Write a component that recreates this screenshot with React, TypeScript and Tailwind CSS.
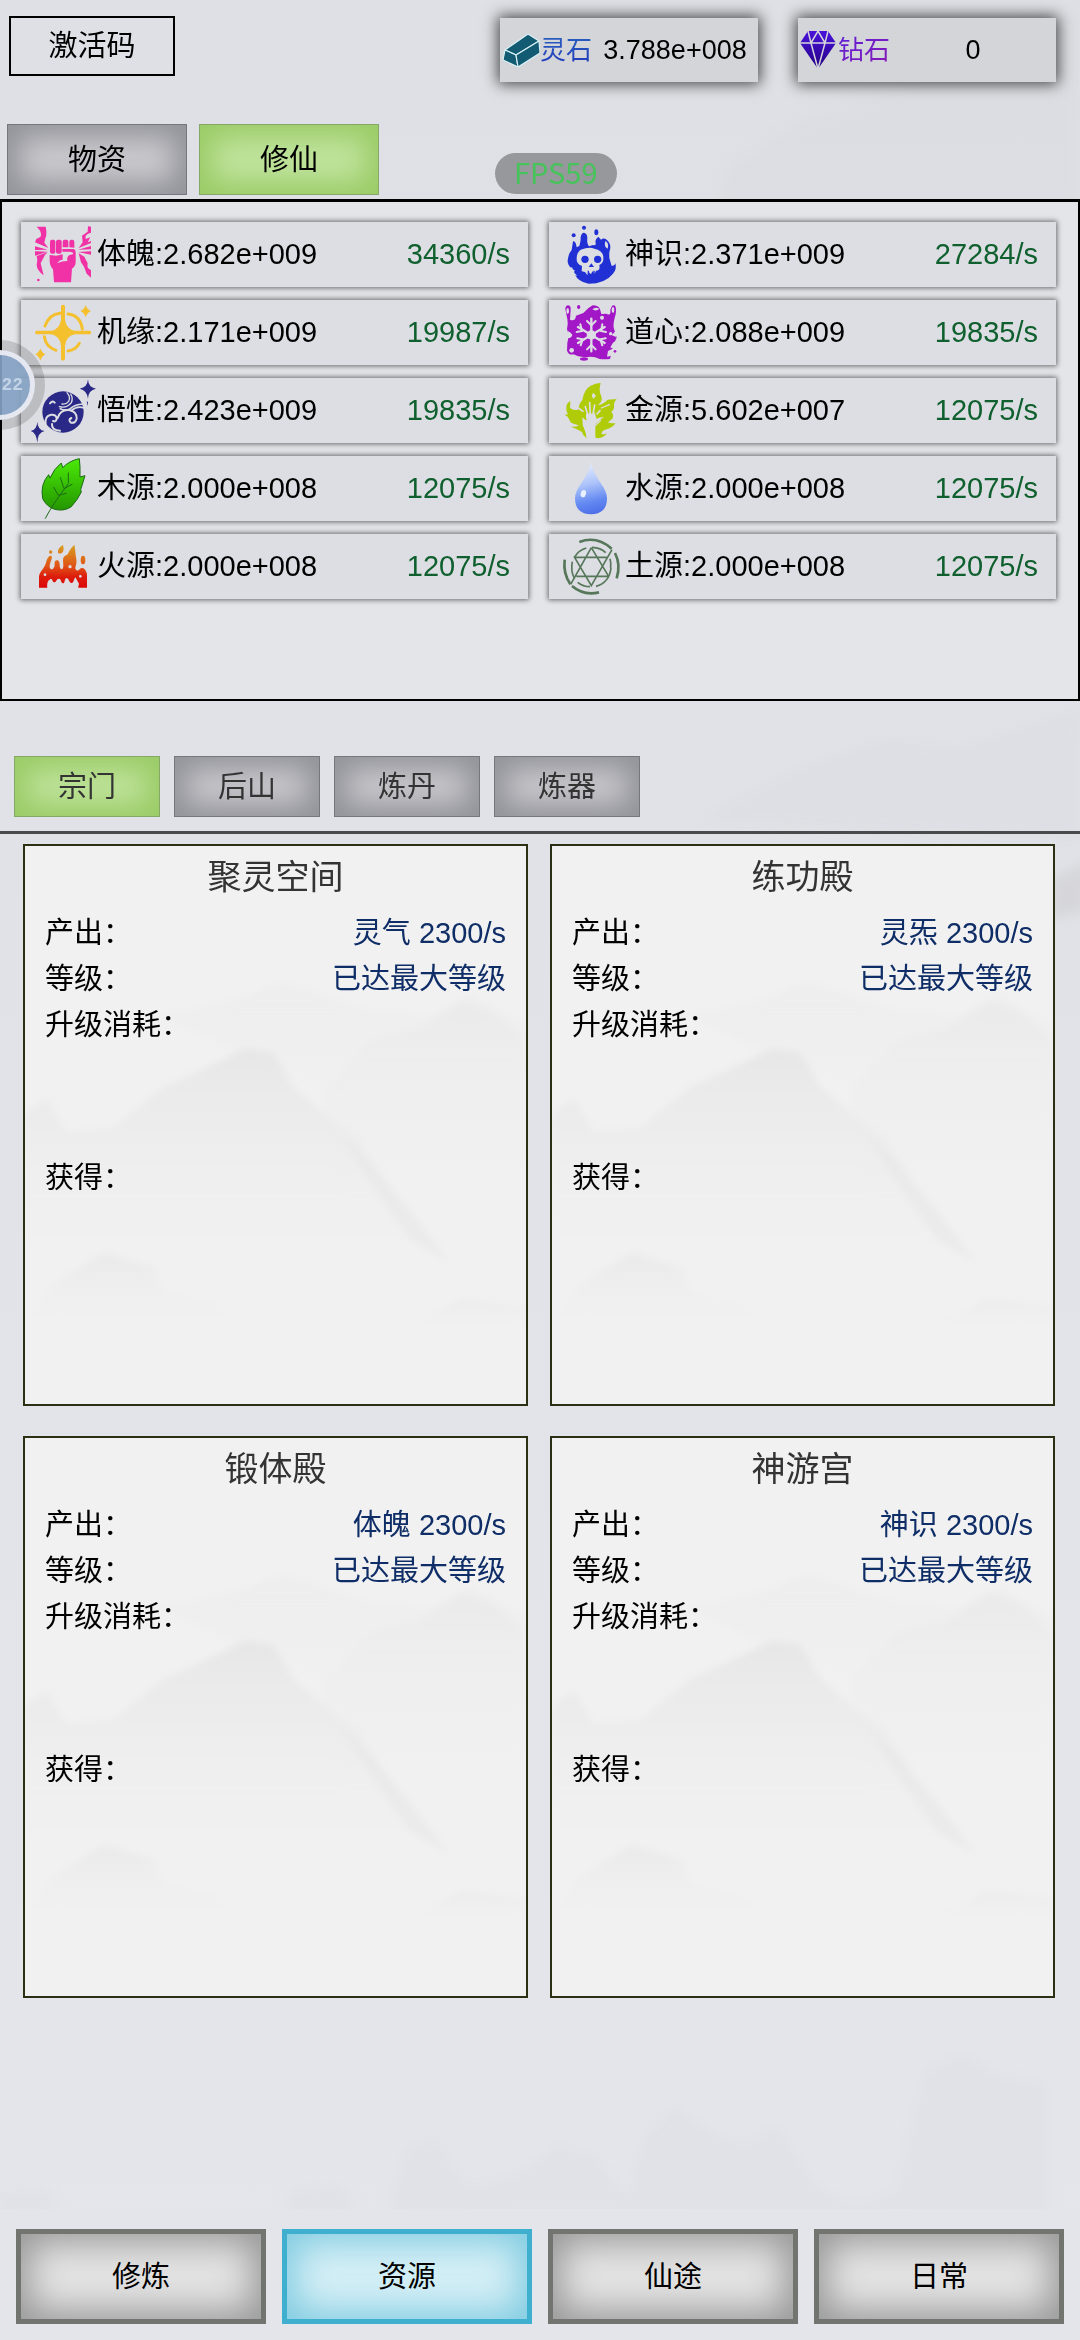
import { useState, type ReactNode } from "react";
import clsx from "clsx";

type IconProps = { box: string; children: ReactNode };

const Icon = ({ box, children }: IconProps) => (
  <svg viewBox={box} className="h-[58px] w-[58px] shrink-0 overflow-visible" aria-hidden="true">
    {children}
  </svg>
);

const FistIcon = () => (
  <Icon box="102 76 174 174">
    <g fill="#f032a6">
      <path d="M110 78h27q5 22-1 35l-3 13 12 16-40-17 4-10 12-6q8-13-11-31z" />
      <path d="M105 137l38 10-38 1zM105 152l38 1-38 12zM110 166l33-11q-10 8-14 19l-7 14 9 36q-20-14-21-31l2-15z" />
      <path d="M273 78v18q-20 4-16 19l14-5-8 15 10-4v6l-37 15 12-17-2-20 17-12 1-16zM273 136v10l-39 1zM273 152v10l-39-8zM236 158l17 10 10 20q-2 8 1 14l9 7v22l-13-12-8-21-9-13z" />
      <circle cx="115" cy="238" r="4" />
      <rect x="150" y="117" width="16" height="42" rx="6" />
      <rect x="168" y="117" width="17" height="42" rx="6" />
      <path d="M188 123q0-6 6-6h5q6 0 6 6v17h-17zM208 123q0-6 6-6h3q6 0 6 6v18l-15-1z" />
      <path d="M187 145h32q8 1 8 10v30q0 11-11 19l-3 41h-51l-3-39q-9-9-10-25v-18l20 2 19-4v16q-11 1-16 11 13-7 30-7-2-12 5-17l13-4q-1-7-13-7h-20z" />
    </g>
  </Icon>
);

const CompassIcon = () => (
  <Icon box="102 310 174 174">
    <g fill="none" stroke="#f4c02e" strokeWidth="9" strokeLinecap="round">
      <path d="M180 338q-32 3-45 38M204 340q37 4 43 45M133 408q4 31 35 41M238 428q-10 19-34 23" />
    </g>
    <path
      d="M183 316q6-8 12 0v41q4 29 30 33h45q8 6 0 11h-45q-27 5-30 35v40q-6 8-12 0v-40q-2-29-29-35h-45q-8-5 0-11h45q25-4 29-33zM257 313q4 14 16 18-12 5-16 19-4-14-16-19 12-4 16-18zM121 443q4 14 16 18-12 5-16 19-4-14-16-19 12-4 16-18z"
      fill="#f4c02e"
    />
  </Icon>
);

const OrbIcon = () => (
  <Icon box="102 544 174 174">
    <circle cx="189" cy="634" r="62" fill="#2b2987" />
    <g fill="none" stroke="#dddee3" strokeLinecap="round">
      <path d="M201 576q12 14 5 26-8 10-20 8M212 580q8 12 2 26-14 18-36 12" strokeWidth="4" />
      <path d="M249 610q-26 2-38 14-16 8-30 0M252 622q-20-8-38 8" strokeWidth="5" />
      <path d="M137 672q-4-26 16-30 17-1 17 13-3 10-11 6M180 690q-26-2-24-20M173 652q8-26 34-24 24 4 23 26-3 15-17 12-10-8 1-14" strokeWidth="6" />
      <path d="M150 608q8-10 14-2" strokeWidth="6" />
    </g>
    <path d="M264 536q1 25 24 28-23 4-24 30-3-25-25-30 23-3 25-28zM112 663q1 25 22 28-21 4-22 35-3-30-20-35 19-4 20-28zM260 602l4 2-1 13z" fill="#2b2987" />
  </Icon>
);

const LeafIcon = () => (
  <Icon box="102 58 174 174">
    <defs>
      <linearGradient id="leaf" x1="0" y1="0" x2="0" y2="1">
        <stop stopColor="#4bea08" />
        <stop offset="1" stopColor="#249600" />
      </linearGradient>
    </defs>
    <path
      d="M238 54q3 22 2 55l15-4-13 42 2 7q-10 22-30 44-22 15-50 8-24-8-36-32-8-43 18-72l4 10q12-28 34-45l4 14q20-21 50-27z"
      fill="url(#leaf)"
      stroke="#1c6b16"
      strokeWidth="3"
    />
    <path d="M136 233q23-44 69-104M205 97v28M181 111l11 33 24-13M161 140l14 24 24-6" fill="none" stroke="#1c6b16" strokeWidth="3" strokeLinecap="round" />
  </Icon>
);

const FireIcon = () => (
  <Icon box="102 292 174 174">
    <defs>
      <linearGradient id="fire" gradientUnits="userSpaceOnUse" x1="0" y1="312" x2="0" y2="440">
        <stop stopColor="#d7a120" />
        <stop offset=".5" stopColor="#e05317" />
        <stop offset=".75" stopColor="#dc1d0c" />
        <stop offset="1" stopColor="#dd0707" />
      </linearGradient>
    </defs>
    <g fill="url(#fire)">
      <path d="M117 441V408C118 392 132 386 138 366C142 350 150 342 155 347C158 356 148 366 149 380C152 390 162 388 164 374C162 362 168 356 175 360C182 366 176 380 184 386C192 384 190 374 189 360C188 350 194 344 202 342C208 330 214 320 223 312C227 330 226 342 229 356C231 370 226 376 226 384C230 392 236 390 240 384C250 378 258 388 261 400V441H235C234 436 240 430 234 424L226 410C220 418 222 426 215 427C207 428 208 414 200 412C192 414 196 428 189 428C182 426 184 414 177 414C168 414 170 426 162 425C156 422 158 414 152 415C144 418 140 428 142 441Z" />
      <path d="M189 313Q193 327 188 335Q180 342 174 336Q171 324 189 313z" />
      <circle cx="152" cy="334" r="5" />
      <ellipse cx="249" cy="358" rx="7" ry="13" />
    </g>
    <g fill="#dddee3">
      <circle cx="210" cy="378" r="5" />
      <circle cx="135" cy="402" r="4" />
      <circle cx="241" cy="407" r="4" />
    </g>
  </Icon>
);

const SkullIcon = () => (
  <Icon box="96 76 174 174">
    <path
      d="M129 122q8-3 11 18l8-4q5-15 4-27 4-15 12-12 8 3 8 16-2 15 5 24l12-4q10 3 8-6-3-11 8-19l8 9q8-7 17 0 12 10 11 25-5 15-3 30l7 24q12-3 11-10 5 20-7 33-24 30-73 30-32-5-42-29l-5-4 6-6q-18-8-22-25 0-23 12-37z"
      fill="#2030d4"
    />
    <path d="M226 121q12 7 7 23-12-5-7-23z" fill="#dddee3" />
    <path
      d="M152 147q26-9 41-3 24 4 27 24 2 19-12 25 4 18-10 17l-4 9-7-7-4 9-7-7-4 9-7-9-10-2 1-16q-18-7-16-25 1-17 12-24zM113 204l13-4 8 18 8 7q-20-3-29-21z"
      fill="#dddee3"
    />
    <g fill="#2030d4">
      <circle cx="165" cy="176" r="11" />
      <circle cx="203" cy="176" r="11" />
      <path d="M184 188l8 11h-16zM173 210h4v10h-4zM190 210h4v10h-4z" />
      <circle cx="162" cy="81" r="6" />
      <circle cx="131" cy="104" r="6" />
      <ellipse cx="199" cy="95" rx="6" ry="9" />
    </g>
  </Icon>
);

const FrostIcon = () => (
  <Icon box="96 310 174 174">
    <path
      d="M106 326q0-12 9-12 8 1 7 13l-2 30q16 6 18-12l22-8q14-16 28-23 18 0 22 12l4 14 16-1q13 9 11-11 4-16 12-14 8 6 4 27-8 26-6 40l9 28q-3 14-11 17l-8 14 11 6-8 14-4 15q-18 2-31 0-21-11-42-5-26-2-36-9-14 4-20-11l1-23 4-20-5-22q4-14 1-30z"
      fill="#a318c6"
    />
    <g fill="#dddee3">
      <ellipse cx="113" cy="331" rx="4" ry="9" />
      <ellipse cx="249" cy="328" rx="4" ry="9" />
      <path d="M187 326q10-9 21-1-10 8-21 1zM112 390q10 4 15 12-2 10-13 10zM256 392l6 4-3 13-14-5z" />
      <circle cx="216" cy="351" r="6" />
      <circle cx="125" cy="449" r="7" />
      <circle cx="242" cy="399" r="5" />
      <path d="M257 426l-9 18-14 7-3 17 13-3 8 5 10-23z" />
    </g>
    <g stroke="#dddee3" strokeWidth="7" strokeLinecap="round" fill="none">
      <path d="M184 354v98M144 379l80 48M144 427l80-48" />
      <path d="M171 361l13 13 13-13M171 446l13-13 13 13M151 371l5 20-16 3M217 371l-4 20 15 3M142 413l16 3-6 18M227 413l-16 3 6 18" strokeWidth="6" />
    </g>
    <circle cx="184" cy="403" r="14" fill="#dddee3" />
    <g fill="#a318c6">
      <ellipse cx="146" cy="319" rx="5" ry="6" />
      <ellipse cx="162" cy="475" rx="12" ry="5" />
      <circle cx="255" cy="452" r="4" />
    </g>
  </Icon>
);

const GoldIcon = () => (
  <Icon box="96 544 174 174">
    <path
      d="M212 548q-7 22 2 39 5 15-10 26 15-1 29-16 14-2 27-1-9 8-8 19 2 10-8 18 9 10 3 21l-13 11q4 3 23 3-15 18-33 19-8 3-10 13 10 2 17-2-14 19-35 13l-2-16 2-25 26-22-14 3-11 5-2-24-7 22-22 4-9-8 1 22 10 27q-2 9 3 14-12-7-15-19-15-10-34-16 17 2 24-4-14-5-23-8l-10-18-9-6 10-1q-7-11-5-23 1-10 12-17l-1 20q9 10 24 6l3-11q2-9 10-18 5-32 25-43 14-7 29-8z"
      fill="#b0cb08"
    />
    <g stroke="#dddee3" strokeWidth="5" strokeLinecap="round" fill="none">
      <path d="M166 618l8 27M179 606l2 38M194 613l-6 32M201 640l9-10M145 622l14 10" />
      <path d="M160 656l14 14v42M194 712v-36l17-16M214 622l24-10" strokeWidth="4" />
    </g>
    <path d="M168 640q13-6 26 3l6 10-13 10q-14 1-19-10zM173 660h19l2 54h-18zM190 576l8 10-8 8q-8-10 0-18z" fill="#dddee3" />
  </Icon>
);

const DropIcon = () => (
  <Icon box="96 58 174 174">
    <defs>
      <linearGradient id="drop" x1=".45" y1="0" x2=".6" y2="1">
        <stop stopColor="#e6edff" />
        <stop offset=".4" stopColor="#aec4fa" />
        <stop offset=".75" stopColor="#6389f1" />
        <stop offset="1" stopColor="#4d6ee9" />
      </linearGradient>
    </defs>
    <path d="M183 64q4 28 29 63 19 26 19 46 0 47-48 48-48-1-48-48 0-20 19-46 25-35 29-63z" fill="url(#drop)" />
    <ellipse cx="160" cy="159" rx="8" ry="11" fill="#e9f0ff" transform="rotate(14 160 159)" />
  </Icon>
);

const EarthIcon = () => (
  <Icon box="96 292 174 174">
    <g fill="none" stroke="#57775a" strokeWidth="5">
      <path d="M148 304q52-20 97 20M104 357q-5 42 17 74M126 436q35 30 81 19M255 337q18 35 5 76" strokeWidth="8" />
      <path d="M169 322q-24 7-35 27M127 363q-6 30 7 51M143 425q16 13 37 13M198 437q40-11 45-55M186 320q27 1 41 16M240 354q4 14 2 28" />
      <path d="M184 321l-62 110M184 321l52 86M132 347l52 88 62-108M132 350h102M139 407h98" strokeWidth="5" />
    </g>
  </Icon>
);

const IngotIcon = () => (
  <svg viewBox="0 0 38 34" className="h-[34px] w-[38px] shrink-0" aria-hidden="true">
    <g fill="#125b73" stroke="#d9f2f7" strokeWidth="1.2" strokeLinejoin="round">
      <path d="M3 17L26 1 37 8 14 22z" />
      <path d="M3 17L14 22 16 34 1 27z" />
      <path d="M14 22L37 8 38 20 16 34z" />
    </g>
  </svg>
);

const DiamondIcon = () => (
  <svg viewBox="0 0 36 38" className="h-[38px] w-[36px] shrink-0" aria-hidden="true">
    <defs>
      <linearGradient id="diamond" x1="0" y1="0" x2="0" y2="1">
        <stop stopColor="#4a12dc" />
        <stop offset="1" stopColor="#230080" />
      </linearGradient>
    </defs>
    <path d="M8 0h20l8 12-18 26L0 12z" fill="url(#diamond)" />
    <path d="M0 12h36M8 0l3 12 7-12 7 12 3-12M11 12l7 26 7-26" fill="none" stroke="#d4d5d9" strokeWidth="1.5" />
  </svg>
);

const resources = [
  { name: "体魄", amount: "2.682e+009", rate: "34360/s", icon: <FistIcon /> },
  { name: "神识", amount: "2.371e+009", rate: "27284/s", icon: <SkullIcon /> },
  { name: "机缘", amount: "2.171e+009", rate: "19987/s", icon: <CompassIcon /> },
  { name: "道心", amount: "2.088e+009", rate: "19835/s", icon: <FrostIcon /> },
  { name: "悟性", amount: "2.423e+009", rate: "19835/s", icon: <OrbIcon /> },
  { name: "金源", amount: "5.602e+007", rate: "12075/s", icon: <GoldIcon /> },
  { name: "木源", amount: "2.000e+008", rate: "12075/s", icon: <LeafIcon /> },
  { name: "水源", amount: "2.000e+008", rate: "12075/s", icon: <DropIcon /> },
  { name: "火源", amount: "2.000e+008", rate: "12075/s", icon: <FireIcon /> },
  { name: "土源", amount: "2.000e+008", rate: "12075/s", icon: <EarthIcon /> },
];

const buildings = [
  { name: "聚灵空间", output: "灵气 2300/s" },
  { name: "练功殿", output: "灵炁 2300/s" },
  { name: "锻体殿", output: "体魄 2300/s" },
  { name: "神游宫", output: "神识 2300/s" },
];

const storeTabs = ["物资", "修仙"];
const placeTabs = ["宗门", "后山", "炼丹", "炼器"];
const navItems = ["修炼", "资源", "仙途", "日常"];

const Currency = ({ icon, name, nameClass, value }: { icon: ReactNode; name: string; nameClass: string; value: string }) => (
  <div className="flex h-16 w-[258px] items-center bg-[#d4d5d9] pl-[2px] shadow-[0_0_14px_2px_rgba(0,0,0,0.7)]">
    <div className="flex w-[38px] shrink-0 items-center">{icon}</div>
    <span className={clsx("bg-clip-text text-[26px] text-transparent", nameClass)}>{name}</span>
    <span className="flex-1 text-center text-[27px]">{value}</span>
  </div>
);

const Tab = ({ active, className, onClick, children }: { active: boolean; className: string; onClick: () => void; children: ReactNode }) => (
  <button
    type="button"
    onClick={onClick}
    className={clsx(
      "border pt-[2px] text-[29px]",
      className,
      active
        ? "border-[#86a866] bg-[#c0e49d] shadow-[inset_0_0_28px_12px_#9acb66]"
        : "border-[#76777d] bg-[#cbcacf] shadow-[inset_0_0_28px_12px_#929399]"
    )}
  >
    {children}
  </button>
);

const CardMountains = () => (
  <svg viewBox="0 0 505 562" preserveAspectRatio="none" className="absolute inset-0 h-full w-full" aria-hidden="true">
    <defs>
      <linearGradient id="hill" x1="0" y1="0" x2="0" y2="1">
        <stop stopColor="#e5e5e5" />
        <stop offset="1" stopColor="#f1f1f1" stopOpacity="0" />
      </linearGradient>
      <filter id="mist">
        <feGaussianBlur stdDeviation="4" />
      </filter>
    </defs>
    <g filter="url(#mist)">
      <path d="M135 170q50-6 90-20l35-14 40 14 50 16 60 4 40-20 55 30v190H320L300 250z" fill="url(#hill)" opacity=".25" />
      <path d="M300 245l50-50 50-12 40-27 30 10 35 30v190H330z" fill="url(#hill)" opacity=".4" />
      <path d="M0 270l22-16 20 34 46-4 50-40 60-28 24-12 28 4 20 34 38 32 30 22 30 50 30 36 28 40V446H0z" fill="url(#hill)" opacity=".85" />
      <path d="M318 290l32 30 40 50 38 50-40-24-40-56z" fill="#e5e5e5" opacity=".5" />
      <path d="M0 480l30-40 50-30 50 14 10 26 50 10 60 38z" fill="url(#hill)" opacity=".6" />
      <path d="M380 484l60-28 65 8v26z" fill="url(#hill)" opacity=".5" />
    </g>
  </svg>
);

const BuildingCard = ({ name, output }: { name: string; output: string }) => (
  <article className="relative min-h-[562px] border-2 border-[#2b3014] bg-[#f1f1f1]">
    <CardMountains />
    <div className="relative px-5">
      <h2 className="pt-1 text-center text-[34px] leading-[54px] text-[#333]">{name}</h2>
      <dl className="mt-[6px] text-[29px] leading-[46px]">
        <div className="flex justify-between">
          <dt>产出：</dt>
          <dd className="text-[#0f2d66]">{output}</dd>
        </div>
        <div className="flex justify-between">
          <dt>等级：</dt>
          <dd className="text-[#0f2d66]">已达最大等级</dd>
        </div>
        <div className="min-h-[153px]">
          <dt>升级消耗：</dt>
        </div>
        <div>
          <dt>获得：</dt>
        </div>
      </dl>
    </div>
  </article>
);

const Backdrop = () => (
  <div className="pointer-events-none absolute inset-0 overflow-hidden" aria-hidden="true">
    <svg viewBox="0 0 1080 2340" preserveAspectRatio="none" className="h-full w-full">
      <defs>
        <filter id="haze">
          <feGaussianBlur stdDeviation="6" />
        </filter>
      </defs>
      <g fill="#d3d3d7" filter="url(#haze)">
        <path d="M710 230l20-60 70-50 90-30 90-50 100-30v260z" opacity=".2" />
        <path d="M700 820l100-50 90-30 70 10 120-40v130z" opacity=".15" />
        <path d="M1050 880l40-20v50l-40 10z" opacity=".8" />
        <path d="M290 2220v-30l50-4 20 34zM386 2220l20-70 30-10 30 46 50-10 40-30 40 10 30 40 20-60 30-30 40 30 30 10 30-20 40 60 40 20 40-16 30-120 40-14 30 20 50 10v130zM0 2190l50 2 6 28H0z" opacity=".15" />
      </g>
    </svg>
  </div>
);

const App = () => {
  const [store, setStore] = useState("修仙");
  const [place, setPlace] = useState("宗门");
  const [page, setPage] = useState("资源");

  return (
    <div className="relative flex min-h-screen flex-col overflow-hidden bg-linear-to-b from-[#dee0e5] to-[#e5e6eb] font-['Liberation_Sans','Noto_Sans_CJK_SC',sans-serif] text-black">
      <Backdrop />

      <header className="relative flex items-start justify-between pt-[16px] pr-6 pl-[9px]">
        <button type="button" className="h-[60px] w-[166px] border-2 border-black pt-[2px] text-[29px]">
          激活码
        </button>
        <div className="flex gap-10 pt-[2px]">
          <Currency icon={<IngotIcon />} name="灵石" nameClass="bg-linear-to-b from-[#2a62c0] to-[#2231b8]" value="3.788e+008" />
          <Currency icon={<DiamondIcon />} name="钻石" nameClass="bg-linear-to-br from-[#5a1ad8] to-[#8a14b4]" value="0" />
        </div>
      </header>

      <div className="relative mt-[42px] flex items-end gap-3 pl-[7px]">
        {storeTabs.map((tab) => (
          <Tab key={tab} active={tab === store} onClick={() => setStore(tab)} className="h-[71px] w-[180px]">
            {tab}
          </Tab>
        ))}
        <div className="mb-px ml-[104px] rounded-full bg-[#97989b] px-[19px] pb-1 font-['Noto_Sans_CJK_SC',sans-serif] text-[29px] leading-[37px] text-[#46c35a]">
          FPS59
        </div>
      </div>

      <section className="relative mt-1 min-h-[502px] border-2 border-t-3 border-black bg-[#e4e5e9] px-[19px] pt-5 pr-[22px]">
        <ul className="grid grid-cols-2 gap-x-[21px] gap-y-[13px]">
          {resources.map((item) => (
            <li key={item.name} className="flex h-[65px] items-center bg-[#dddee3] pr-[18px] pl-[13px] text-[29px] shadow-[0_0_5px_1px_rgba(0,0,0,0.55)]">
              {item.icon}
              <span className="ml-[5px]">
                {item.name}:{item.amount}
              </span>
              <span className="ml-auto text-[#10602f]">{item.rate}</span>
            </li>
          ))}
        </ul>
      </section>

      {/* floating assist ball, half hidden by the screen edge */}
      <div className="absolute top-[340px] -left-[45px] flex h-[90px] w-[90px] items-center justify-center rounded-full bg-black/15">
        <div className="flex h-[70px] w-[70px] items-center justify-end rounded-full border-[5px] border-[#eef0f4]/90 bg-[#86a3c6]/90 pr-[7px] font-['Liberation_Mono',monospace] text-lg font-bold text-[#c3d3e6]">
          22
        </div>
      </div>

      <div className="relative mt-[55px] flex gap-[14px] border-b-3 border-[#4a4a4d] pb-[14px] pl-[14px]">
        {placeTabs.map((tab) => (
          <Tab key={tab} active={tab === place} onClick={() => setPlace(tab)} className="h-[61px] w-[146px] text-[#333]">
            {tab}
          </Tab>
        ))}
      </div>

      <main className="relative grid grid-cols-2 gap-x-[22px] gap-y-[30px] pt-[10px] pr-[25px] pl-[23px]">
        {buildings.map((item) => (
          <BuildingCard key={item.name} {...item} />
        ))}
      </main>

      <nav className="relative mt-auto grid grid-cols-4 gap-4 bg-[#e4e5ea] px-4 pt-5 pb-4">
        {navItems.map((item) => (
          <button
            key={item}
            type="button"
            onClick={() => setPage(item)}
            className={clsx(
              "h-[95px] border-[5px] pt-[2px] text-[29px]",
              item === page
                ? "border-[#3fafcf] bg-[#d5eff6] shadow-[inset_0_0_36px_8px_#7fcbe0]"
                : "border-[#72756f] bg-[#e4e4e4] shadow-[inset_0_0_36px_8px_#969696]"
            )}
          >
            {item}
          </button>
        ))}
      </nav>
    </div>
  );
};

export default App;
